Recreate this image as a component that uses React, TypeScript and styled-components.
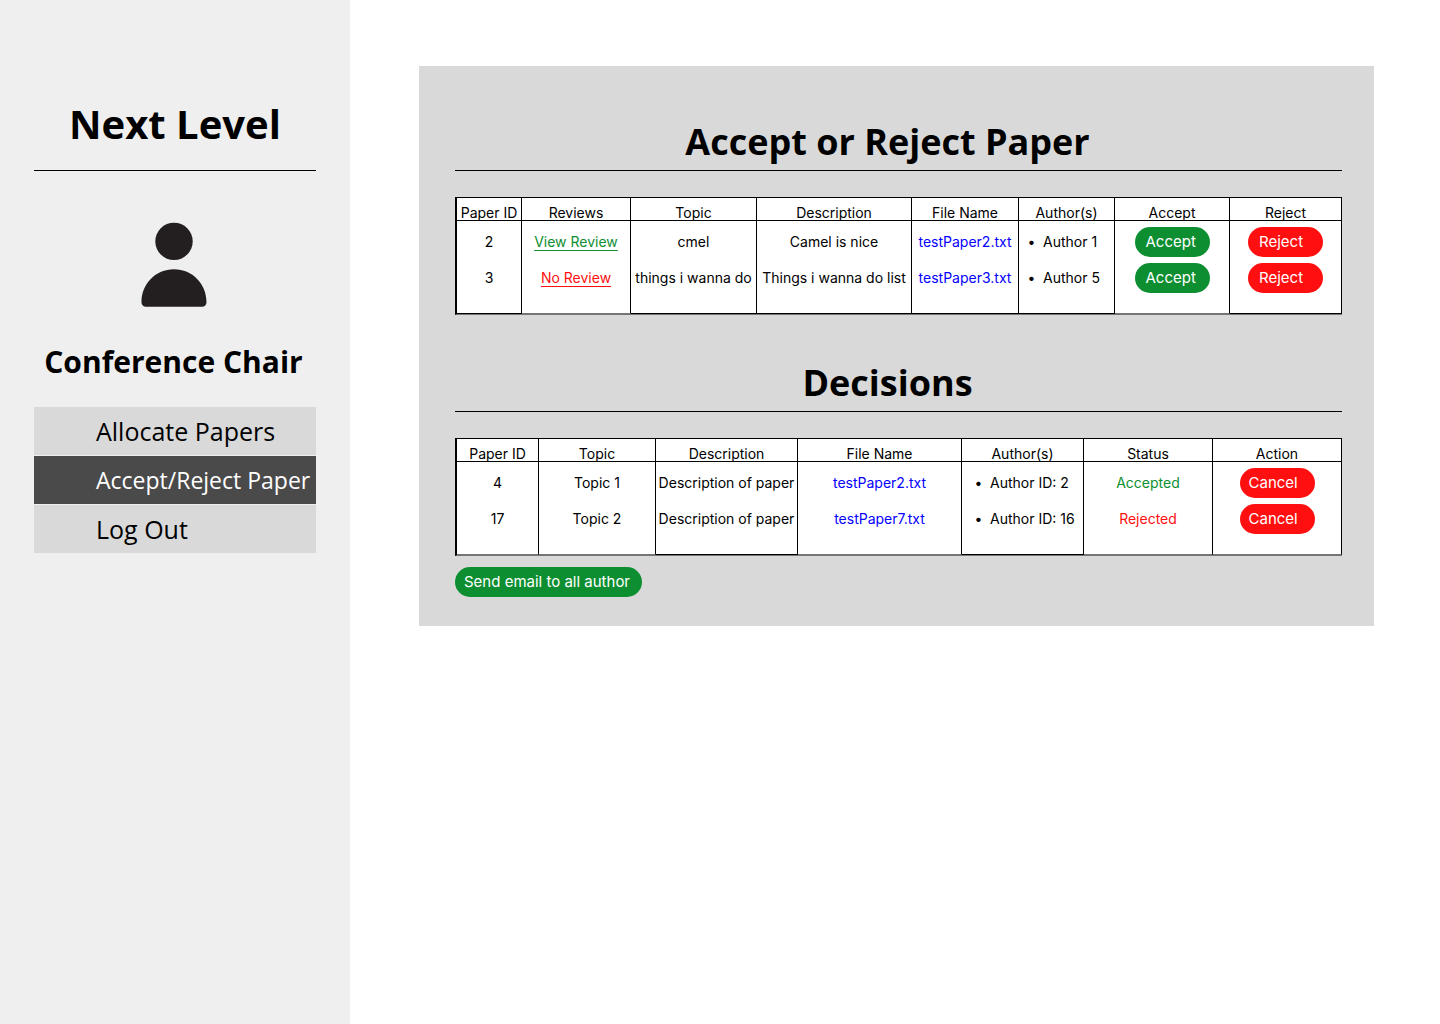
import React from "react";
import styled, { createGlobalStyle } from "styled-components";

const GlobalStyle = createGlobalStyle`
  *, *::before, *::after { box-sizing: border-box; }
  body {
    margin: 0;
    background: #ffffff;
    color: #000000;
    font-family: Inter, "Liberation Sans", sans-serif;
    font-size: 14px;
    line-height: 20px;
  }
`;

const headingFont = `"Open Sans", "Noto Sans", sans-serif`;
const green = "#0d8f31";
const red = "#ff0f0f";

const Page = styled.div`
  display: flex;
  min-height: 100vh;
`;

const Sidebar = styled.aside`
  flex: 0 0 350px;
  padding: 96px 34px 0;
  background: #efefef;
`;

const Brand = styled.h1`
  margin: 0;
  padding-bottom: 18px;
  border-bottom: 1px solid #000000;
  font: 700 40px/56px ${headingFont};
  text-align: center;
`;

const Profile = styled.div`
  padding: 51px 3px 24px 0;
`;

const Avatar = styled.svg`
  display: block;
  width: 66px;
  height: 85px;
  margin: 0 auto 34px;
`;

const Role = styled.h2`
  margin: 0;
  font: 700 30px/42px ${headingFont};
  text-align: center;
`;

const Nav = styled.nav`
  display: grid;
  gap: 1px;
`;

const NavLink = styled.a<{ $active?: boolean }>`
  padding-left: 62px;
  background: ${(p) => (p.$active ? "#4a4a4a" : "#d9d9d9")};
  color: ${(p) => (p.$active ? "#ffffff" : "#000000")};
  font: 400 ${(p) => (p.$active ? 23 : 25)}px/48px ${headingFont};
  text-decoration: none;
  white-space: nowrap;
`;

const Main = styled.main`
  flex: 1;
  min-width: 0;
  padding: 66px 66px 66px 69px;
`;

const Panel = styled.div`
  padding: 51px 32px 29px 36px;
  background: #d9d9d9;
`;

const Section = styled.section`
  & + & {
    margin-top: 43px;
  }
`;

const SectionTitle = styled.h2`
  margin: 0 0 26px;
  padding: 0 22px 3px 0;
  border-bottom: 1px solid #000000;
  font: 700 36px/50px ${headingFont};
  text-align: center;
`;

const Table = styled.table`
  width: 100%;
  table-layout: fixed;
  border-collapse: separate;
  border-spacing: 0;
  border-top: 1px solid #000000;
  border-left: 2px solid #000000;
  border-bottom: 1px solid #757575;
  background: #ffffff;
`;

const Col = styled.col<{ $width: number }>`
  width: ${(p) => p.$width}px;
`;

const HeadCell = styled.th`
  height: 23px;
  padding: 7px 0 0;
  border-right: 1px solid #000000;
  border-bottom: 1px solid #000000;
  font-weight: 400;
  line-height: 15px;
  white-space: nowrap;
`;

const Cell = styled.td<{ $faint?: boolean }>`
  height: 36px;
  padding: 0;
  border-right: 1px solid #000000;
  text-align: center;
  white-space: nowrap;

  tr:first-child > & {
    height: 39px;
    padding-top: 3px;
  }
  tr:last-child > & {
    height: 54px;
    padding-bottom: 17px;
    border-bottom: 1px solid ${(p) => (p.$faint ? "#757575" : "#000000")};
  }
`;

const ReviewLink = styled.a<{ $color: string }>`
  color: ${(p) => p.$color};
  text-decoration: underline;
  text-underline-offset: 3px;
`;

const FileLink = styled.a`
  color: #0500ff;
  text-decoration: none;
`;

const Authors = styled.ul<{ $indent: number }>`
  margin: 0;
  padding-left: ${(p) => p.$indent}px;
  list-style-type: "•\\00a0\\00a0";
  text-align: left;
`;

const Status = styled.span<{ $color: string }>`
  color: ${(p) => p.$color};
`;

const Pill = styled.button<{ $color: string; $width: number; $indent: number }>`
  display: block;
  width: ${(p) => p.$width}px;
  height: 30px;
  margin: 0 auto;
  padding: 0 0 0 ${(p) => p.$indent}px;
  border: 0;
  border-radius: 15px;
  background: ${(p) => p.$color};
  color: #ffffff;
  font: 400 15px/30px Inter, "Liberation Sans", sans-serif;
  text-align: left;
  white-space: nowrap;
  cursor: pointer;
`;

const Footer = styled.div`
  display: flex;
  margin-top: 11px;

  ${Pill} {
    margin: 0;
  }
`;

type Column = { label: string; width: number; faint?: boolean };

const paperColumns: Column[] = [
  { label: "Paper ID", width: 65 },
  { label: "Reviews", width: 109, faint: true },
  { label: "Topic", width: 126 },
  { label: "Description", width: 155 },
  { label: "File Name", width: 107 },
  { label: "Author(s)", width: 96 },
  { label: "Accept", width: 115, faint: true },
  { label: "Reject", width: 112 },
];

const papers = [
  { id: 2, reviewed: true, topic: "cmel", description: "Camel is nice", file: "testPaper2.txt", author: "Author 1" },
  { id: 3, reviewed: false, topic: "things i wanna do", description: "Things i wanna do list", file: "testPaper3.txt", author: "Author 5" },
];

const decisionColumns: Column[] = [
  { label: "Paper ID", width: 82, faint: true },
  { label: "Topic", width: 117, faint: true },
  { label: "Description", width: 142 },
  { label: "File Name", width: 164, faint: true },
  { label: "Author(s)", width: 122 },
  { label: "Status", width: 129, faint: true },
  { label: "Action", width: 129, faint: true },
];

const decisions = [
  { id: 4, topic: "Topic 1", description: "Description of paper", file: "testPaper2.txt", author: "Author ID: 2", accepted: true },
  { id: 17, topic: "Topic 2", description: "Description of paper", file: "testPaper7.txt", author: "Author ID: 16", accepted: false },
];

function DataTable({ columns, rows }: { columns: Column[]; rows: React.ReactNode[][] }) {
  return (
    <Table>
      <colgroup>
        {columns.map((c) => (
          <Col key={c.label} $width={c.width} />
        ))}
      </colgroup>
      <thead>
        <tr>
          {columns.map((c) => (
            <HeadCell key={c.label} scope="col">{c.label}</HeadCell>
          ))}
        </tr>
      </thead>
      <tbody>
        {rows.map((cells, r) => (
          <tr key={r}>
            {cells.map((cell, i) => (
              <Cell key={i} $faint={columns[i].faint}>{cell}</Cell>
            ))}
          </tr>
        ))}
      </tbody>
    </Table>
  );
}

export default function App() {
  return (
    <Page>
      <GlobalStyle />
      <Sidebar>
        <Brand>Next Level</Brand>
        <Profile>
          <Avatar viewBox="0 0 66 85" fill="#231f20" aria-hidden="true">
            <circle cx="33" cy="19.4" r="18.7" />
            <path d="M33 47.3C14.5 47.3.5 62 .5 80.2a4.4 4.4 0 0 0 4.4 4.5h56.2a4.4 4.4 0 0 0 4.4-4.5C65.500 62 51.500 47.300 33 47.300Z" />
          </Avatar>
          <Role>Conference Chair</Role>
        </Profile>
        <Nav>
          <NavLink href="#allocate">Allocate Papers</NavLink>
          <NavLink href="#decide" $active aria-current="page">Accept/Reject Paper</NavLink>
          <NavLink href="#logout">Log Out</NavLink>
        </Nav>
      </Sidebar>
      <Main>
        <Panel>
          <Section>
            <SectionTitle>Accept or Reject Paper</SectionTitle>
            <DataTable
              columns={paperColumns}
              rows={papers.map((p) => [
                p.id,
                <ReviewLink href="#review" $color={p.reviewed ? green : red}>
                  {p.reviewed ? "View Review" : "No Review"}
                </ReviewLink>,
                p.topic,
                p.description,
                <FileLink href="#file">{p.file}</FileLink>,
                <Authors $indent={24}><li>{p.author}</li></Authors>,
                <Pill type="button" $color={green} $width={75} $indent={11}>Accept</Pill>,
                <Pill type="button" $color={red} $width={75} $indent={11}>Reject</Pill>,
              ])}
            />
          </Section>
          <Section>
            <SectionTitle>Decisions</SectionTitle>
            <DataTable
              columns={decisionColumns}
              rows={decisions.map((d) => [
                d.id,
                d.topic,
                d.description,
                <FileLink href="#file">{d.file}</FileLink>,
                <Authors $indent={28}><li>{d.author}</li></Authors>,
                <Status $color={d.accepted ? green : red}>{d.accepted ? "Accepted" : "Rejected"}</Status>,
                <Pill type="button" $color={red} $width={75} $indent={9}>Cancel</Pill>,
              ])}
            />
          </Section>
          <Footer>
            <Pill type="button" $color={green} $width={187} $indent={9}>Send email to all author</Pill>
          </Footer>
        </Panel>
      </Main>
    </Page>
  );
}
